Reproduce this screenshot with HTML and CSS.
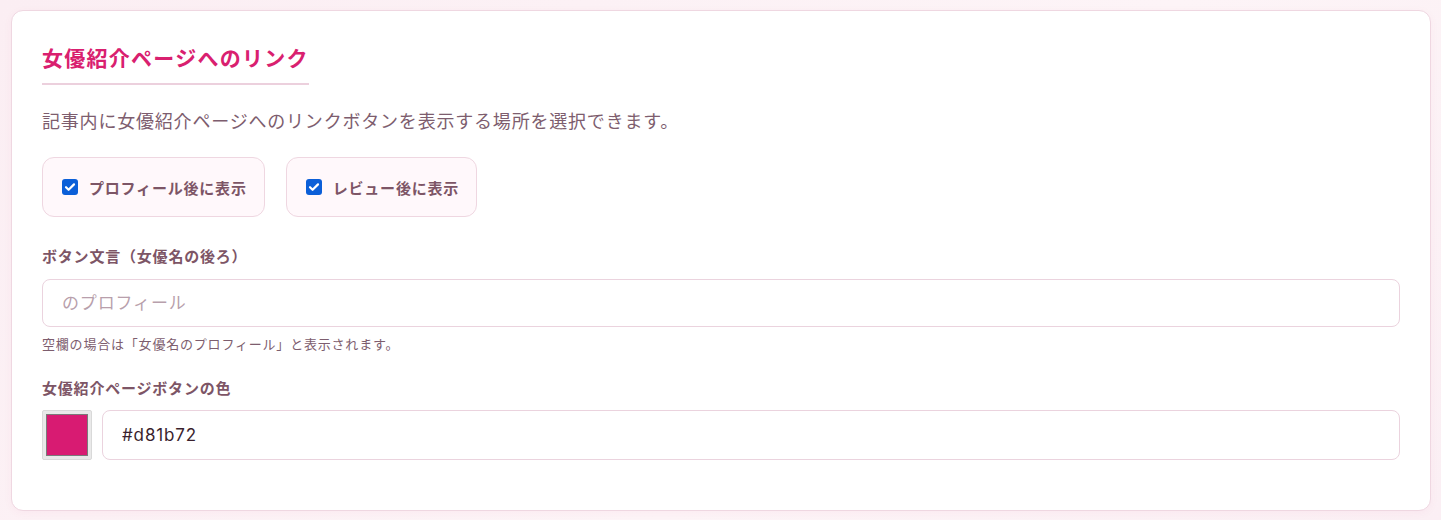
FILE: index.html
```html
<!DOCTYPE html>
<html lang="ja">
<head>
<meta charset="utf-8">
<title>女優紹介ページへのリンク</title>
<link rel="stylesheet" href="styles.css">
</head>
<body>
<section class="card">
  <h2 class="title">女優紹介ページへのリンク</h2>
  <p class="desc">記事内に女優紹介ページへのリンクボタンを表示する場所を選択できます。</p>
  <div class="options">
    <label class="option"><input type="checkbox" class="check" checked><span>プロフィール後に表示</span></label>
    <label class="option"><input type="checkbox" class="check" checked><span>レビュー後に表示</span></label>
  </div>
  <div class="field">
    <label class="field-label">ボタン文言（女優名の後ろ）</label>
    <input type="text" class="text-input" placeholder="のプロフィール">
    <p class="help">空欄の場合は「女優名のプロフィール」と表示されます。</p>
  </div>
  <div class="field field-color">
    <label class="field-label">女優紹介ページボタンの色</label>
    <div class="color-row">
      <input type="color" class="color-swatch" value="#d81b72">
      <input type="text" class="text-input color-text" value="#d81b72">
    </div>
  </div>
</section>
</body>
</html>
```

FILE: styles.css
```css
* { box-sizing: border-box; }
html, body { height: 100%; }
body {
  margin: 0;
  padding: 10px 10px 0 11px;
  background: linear-gradient(135deg, #fbeef3 0%, #fdf4f7 60%, #fbeff4 100%);
  font-family: Inter, "Noto Sans CJK JP", sans-serif;
  letter-spacing: 0.05em;
  color: #7a5566;
}
.card {
  background: #ffffff;
  border: 1px solid #efd7e1;
  border-radius: 12px;
  padding: 33px 30px 50px 30px;
  box-shadow: 0 2px 10px rgba(216, 27, 114, 0.04);
}
.title {
  display: inline-block;
  margin: 0 0 23px 0;
  padding-bottom: 9px;
  border-bottom: 2px solid #ecd0dd;
  font-size: 21px;
  line-height: 30px;
  font-weight: 700;
  color: #d9206f;
  letter-spacing: 0.06em;
}
.desc {
  margin: 0 0 21px 0;
  font-size: 18px;
  line-height: 28px;
  color: #7d5d6e;
}
.options {
  display: flex;
  gap: 21px;
  margin-bottom: 29px;
}
.option {
  display: flex;
  align-items: center;
  gap: 11px;
  height: 60px;
  padding: 0 17px 0 19px;
  background: #fff8fb;
  border: 1px solid #efd7e1;
  border-radius: 12px;
  font-size: 15px;
  font-weight: 700;
  color: #7d5566;
}
.check {
  -webkit-appearance: none;
  appearance: none;
  flex: 0 0 16px;
  margin: 0;
  width: 16px;
  height: 16px;
  border-radius: 3px;
  background-color: #0b5fd8;
  background-image: url("data:image/svg+xml,%3Csvg xmlns='http://www.w3.org/2000/svg' viewBox='0 0 16 16'%3E%3Cpath d='M4 8.2l2.6 2.6L12 5.4' fill='none' stroke='white' stroke-width='2.2' stroke-linecap='round' stroke-linejoin='round'/%3E%3C/svg%3E");
  background-size: 16px 16px;
  background-repeat: no-repeat;
}
.field-label {
  display: block;
  margin-bottom: 11px;
  font-size: 15px;
  line-height: 22px;
  font-weight: 700;
  color: #7d5566;
}
.text-input {
  display: block;
  width: 100%;
  height: 48px;
  padding: 0 19px;
  border: 1px solid #ebd3de;
  border-radius: 8px;
  background: #ffffff;
  font-family: Inter, "Noto Sans CJK JP", sans-serif;
  font-size: 17px;
  letter-spacing: 0.05em;
  color: #3a1f2d;
  outline: none;
}
.text-input::placeholder { color: #b89fac; }
.help {
  margin: 7px 0 0 0;
  font-size: 13px;
  line-height: 20px;
  color: #7d5d6e;
}
.field-color { margin-top: 24px; }
.field-color .field-label { margin-bottom: 10px; }
.color-row {
  display: flex;
  gap: 10px;
}
.color-swatch {
  -webkit-appearance: none;
  appearance: none;
  flex: 0 0 50px;
  width: 50px;
  height: 50px;
  margin: 0;
  padding: 3px;
  background: #e9e9e9;
  border: 1px solid #d9d9d9;
  border-radius: 2px;
  cursor: pointer;
}
.color-swatch::-webkit-color-swatch-wrapper { padding: 0; }
.color-swatch::-webkit-color-swatch {
  border: 1px solid #7a7a7a;
  border-radius: 0;
}
.color-text {
  flex: 1;
  height: 50px;
}
```
